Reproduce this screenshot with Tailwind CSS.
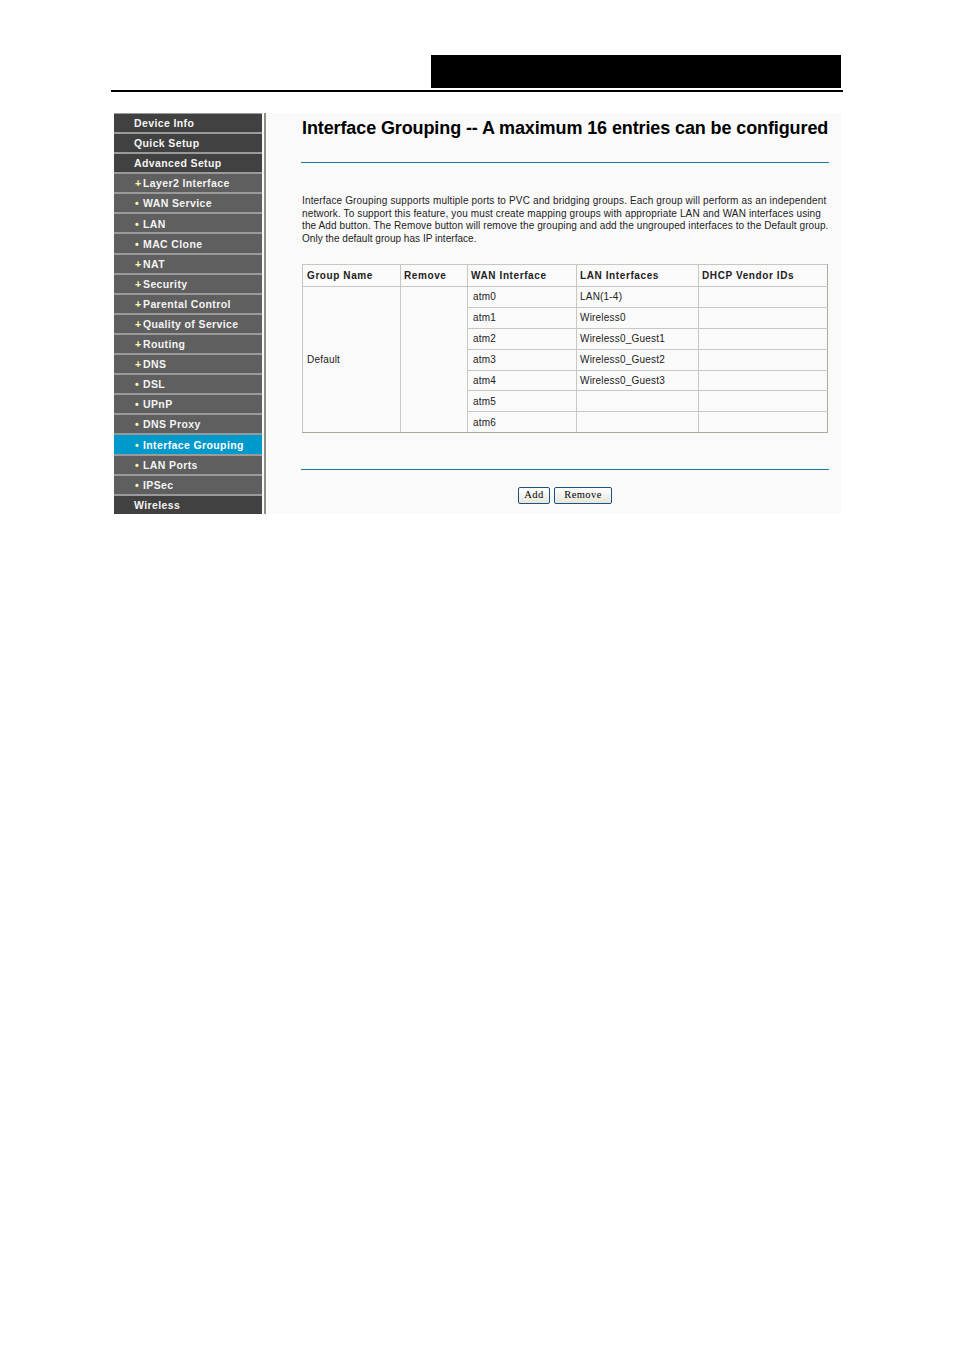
<!DOCTYPE html>
<html lang="en">
<head>
    <meta charset="UTF-8">
    <script src="https://cdn.jsdelivr.net/npm/@tailwindcss/browser@4"></script>
    <title>Interface Grouping</title>
</head>
<body class="bg-white">
    <div class="w-[954px] h-[1350px] pt-[55px] pl-[111px] font-['Liberation_Sans',Arial,sans-serif]">
        <!-- page header -->
        <div class="w-[732px] h-[37px] border-b-2 border-black">
            <div class="ml-[320px] w-[410px] h-[33px] bg-black"></div>
        </div>

        <div class="flex ml-[3px] mt-[21px] w-[727px] h-[401px] bg-[#fafafa]">
            <!-- side menu -->
            <nav class="w-[148px] shrink-0 h-[401px] flex flex-col text-[10.5px] font-bold tracking-[0.38px] text-[#f4f4f4]">
                <a class="h-[21px] flex items-center pl-5 pt-[2px] bg-[#414141] border-t border-[#9a9a9a] border-b-2 border-b-[#9a9a9a]">Device Info</a>
                <a class="h-[20.1px] flex items-center pl-5 pt-[2px] bg-[#414141] border-b-2 border-[#9a9a9a]">Quick Setup</a>
                <a class="h-[20.1px] flex items-center pl-5 pt-[2px] bg-[#414141] border-b-2 border-[#9a9a9a]">Advanced Setup</a>
                <a class="h-[20.1px] flex items-center pl-[21px] pt-[2px] bg-[#5f5f5f] border-b-2 border-[#9a9a9a]"><span class="w-2 text-[#ffffaa]">+</span>Layer2 Interface</a>
                <a class="h-[20.1px] flex items-center pl-[21px] pt-[2px] bg-[#5f5f5f] border-b-2 border-[#9a9a9a]"><span class="w-2 text-[#ffffaa]">•</span>WAN Service</a>
                <a class="h-[20.1px] flex items-center pl-[21px] pt-[2px] bg-[#5f5f5f] border-b-2 border-[#9a9a9a]"><span class="w-2 text-[#ffffaa]">•</span>LAN</a>
                <a class="h-[20.1px] flex items-center pl-[21px] pt-[2px] bg-[#5f5f5f] border-b-2 border-[#9a9a9a]"><span class="w-2 text-[#ffffaa]">•</span>MAC Clone</a>
                <a class="h-[20.1px] flex items-center pl-[21px] pt-[2px] bg-[#5f5f5f] border-b-2 border-[#9a9a9a]"><span class="w-2 text-[#ffffaa]">+</span>NAT</a>
                <a class="h-[20.1px] flex items-center pl-[21px] pt-[2px] bg-[#5f5f5f] border-b-2 border-[#9a9a9a]"><span class="w-2 text-[#ffffaa]">+</span>Security</a>
                <a class="h-[20.1px] flex items-center pl-[21px] pt-[2px] bg-[#5f5f5f] border-b-2 border-[#9a9a9a]"><span class="w-2 text-[#ffffaa]">+</span>Parental Control</a>
                <a class="h-[20.1px] flex items-center pl-[21px] pt-[2px] bg-[#5f5f5f] border-b-2 border-[#9a9a9a]"><span class="w-2 text-[#ffffaa]">+</span>Quality of Service</a>
                <a class="h-[20.1px] flex items-center pl-[21px] pt-[2px] bg-[#5f5f5f] border-b-2 border-[#9a9a9a]"><span class="w-2 text-[#ffffaa]">+</span>Routing</a>
                <a class="h-[20.1px] flex items-center pl-[21px] pt-[2px] bg-[#5f5f5f] border-b-2 border-[#9a9a9a]"><span class="w-2 text-[#ffffaa]">+</span>DNS</a>
                <a class="h-[20.1px] flex items-center pl-[21px] pt-[2px] bg-[#5f5f5f] border-b-2 border-[#9a9a9a]"><span class="w-2 text-[#ffffaa]">•</span>DSL</a>
                <a class="h-[20.1px] flex items-center pl-[21px] pt-[2px] bg-[#5f5f5f] border-b-2 border-[#9a9a9a]"><span class="w-2 text-[#ffffaa]">•</span>UPnP</a>
                <a class="h-[20.1px] flex items-center pl-[21px] pt-[2px] bg-[#5f5f5f] border-b-2 border-[#9a9a9a]"><span class="w-2 text-[#ffffaa]">•</span>DNS Proxy</a>
                <a class="h-[20.1px] flex items-center pl-[21px] pt-[2px] bg-[#0099cc] border-b-2 border-[#9a9a9a] text-white"><span class="w-2 text-[#ffffaa]">•</span>Interface Grouping</a>
                <a class="h-[20.1px] flex items-center pl-[21px] pt-[2px] bg-[#5f5f5f] border-b-2 border-[#9a9a9a]"><span class="w-2 text-[#ffffaa]">•</span>LAN Ports</a>
                <a class="h-[20.1px] flex items-center pl-[21px] pt-[2px] bg-[#5f5f5f] border-b-2 border-[#9a9a9a]"><span class="w-2 text-[#ffffaa]">•</span>IPSec</a>
                <a class="flex-1 flex items-center pl-5 pt-[2px] bg-[#414141]">Wireless</a>
            </nav>
            <div class="w-[2px] shrink-0 ml-[2px] bg-[#8f8f86]"></div>

            <!-- main content -->
            <main class="flex-1 min-w-0 pl-[35px] pr-[12px] text-black">
                <h1 class="h-[29px] pt-[5px] ml-px text-[18px] leading-[21px] font-bold tracking-[-0.11px] whitespace-nowrap">Interface Grouping -- A maximum 16 entries can be configured</h1>
                <div class="mt-[20px] h-px bg-[#1a76a3]"></div>
                <p class="mt-[32px] ml-px w-[530px] text-[10px] leading-[12.67px] text-[#222] whitespace-nowrap">
                    <span class="block tracking-[0.15px]">Interface Grouping supports multiple ports to PVC and bridging groups. Each group will perform as an independent</span>
                    <span class="block tracking-[0.13px]">network. To support this feature, you must create mapping groups with appropriate LAN and WAN interfaces using</span>
                    <span class="block tracking-[0.105px]">the Add button. The Remove button will remove the grouping and add the ungrouped interfaces to the Default group.</span>
                    <span class="block tracking-[0.03px]">Only the default group has IP interface.</span>
                </p>

                <table class="mt-[18px] ml-px w-[526px] h-[168px] table-fixed border-collapse text-[10px] tracking-[0.2px] text-[#222]">
                    <colgroup><col class="w-[98px]"><col class="w-[67px]"><col class="w-[109px]"><col class="w-[122px]"><col></colgroup>
                    <thead>
                        <tr class="h-[22px] font-bold tracking-[0.6px] text-left">
                            <th class="pl-1 border border-[#c8c8c0]">Group Name</th>
                            <th class="pl-[3px] border border-[#c8c8c0]">Remove</th>
                            <th class="pl-[3px] border border-[#c8c8c0]">WAN Interface</th>
                            <th class="pl-[3px] border border-[#c8c8c0]">LAN Interfaces</th>
                            <th class="pl-[3px] border border-[#c8c8c0] border-r-[#aaa99b]">DHCP Vendor IDs</th>
                        </tr>
                    </thead>
                    <tbody>
                        <tr class="h-[21px]">
                            <td rowspan="7" class="pl-1 border border-[#c8c8c0] border-b-[#aaa99b]">Default</td>
                            <td rowspan="7" class="border border-[#c8c8c0] border-b-[#aaa99b]"></td>
                            <td class="pl-[5px] border border-[#c8c8c0]">atm0</td>
                            <td class="pl-[3px] border border-[#c8c8c0]">LAN(1-4)</td>
                            <td class="border border-[#c8c8c0] border-r-[#aaa99b]"></td>
                        </tr>
                        <tr class="h-[21px]"><td class="pl-[5px] border border-[#c8c8c0]">atm1</td><td class="pl-[3px] border border-[#c8c8c0]">Wireless0</td><td class="border border-[#c8c8c0] border-r-[#aaa99b]"></td></tr>
                        <tr class="h-[21px]"><td class="pl-[5px] border border-[#c8c8c0]">atm2</td><td class="pl-[3px] border border-[#c8c8c0]">Wireless0_Guest1</td><td class="border border-[#c8c8c0] border-r-[#aaa99b]"></td></tr>
                        <tr class="h-[21px]"><td class="pl-[5px] border border-[#c8c8c0]">atm3</td><td class="pl-[3px] border border-[#c8c8c0]">Wireless0_Guest2</td><td class="border border-[#c8c8c0] border-r-[#aaa99b]"></td></tr>
                        <tr class="h-[20px]"><td class="pl-[5px] border border-[#c8c8c0]">atm4</td><td class="pl-[3px] border border-[#c8c8c0]">Wireless0_Guest3</td><td class="border border-[#c8c8c0] border-r-[#aaa99b]"></td></tr>
                        <tr class="h-[21px]"><td class="pl-[5px] pt-px border border-[#c8c8c0]">atm5</td><td class="border border-[#c8c8c0]"></td><td class="border border-[#c8c8c0] border-r-[#aaa99b]"></td></tr>
                        <tr class="h-[21px]"><td class="pl-[5px] pt-px border border-[#c8c8c0] border-b-[#aaa99b]">atm6</td><td class="border border-[#c8c8c0] border-b-[#aaa99b]"></td><td class="border border-[#c8c8c0] border-r-[#aaa99b] border-b-[#aaa99b]"></td></tr>
                    </tbody>
                </table>

                <div class="mt-[36px] h-px bg-[#1a76a3]"></div>
                <div class="mt-[17px] ml-[217px] flex gap-1 font-['Liberation_Serif',serif] text-[10.5px] tracking-[0.4px]">
                    <button class="w-[32px] h-[17px] flex items-center justify-center rounded-[2px] border border-[#1c5180] bg-gradient-to-b from-white to-[#e8e6da]">Add</button>
                    <button class="w-[58px] h-[17px] flex items-center justify-center rounded-[2px] border border-[#1c5180] bg-gradient-to-b from-white to-[#e8e6da]">Remove</button>
                </div>
            </main>
        </div>
    </div>
</body>
</html>
